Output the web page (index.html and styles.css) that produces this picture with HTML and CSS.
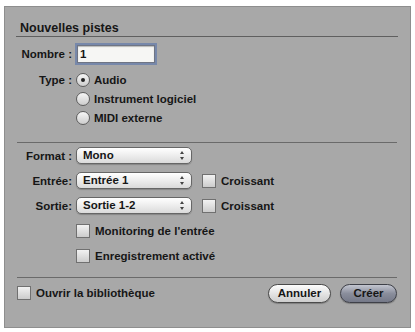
FILE: index.html
```html
<!DOCTYPE html>
<html lang="fr">
<head>
    <meta charset="UTF-8">
    <meta name="viewport" content="width=device-width, initial-scale=1.0">
    <title>Nouvelles pistes</title>
    <link rel="stylesheet" href="styles.css">
</head>
<body>
    <div class="dialog">
        <div class="header">Nouvelles pistes</div>

        <div class="form">
            <div class="row row-nombre">
                <label class="label" for="nombre">Nombre :</label>
                <input class="field" id="nombre" type="text" value="1">
            </div>

            <div class="row row-radio">
                <span class="label">Type :</span>
                <span class="option"><span class="radio checked"></span>Audio</span>
            </div>
            <div class="row row-radio">
                <span class="label"></span>
                <span class="option"><span class="radio"></span>Instrument logiciel</span>
            </div>
            <div class="row row-radio">
                <span class="label"></span>
                <span class="option"><span class="radio"></span>MIDI externe</span>
            </div>
        </div>

        <div class="separator sep-top"></div>

        <div class="form">
            <div class="row row-select">
                <span class="label">Format :</span>
                <span class="select">Mono<span class="arrows"></span></span>
            </div>
            <div class="row row-select">
                <span class="label">Entrée:</span>
                <span class="select">Entrée 1<span class="arrows"></span></span>
                <span class="option option-side"><span class="check"></span>Croissant</span>
            </div>
            <div class="row row-select">
                <span class="label">Sortie:</span>
                <span class="select">Sortie 1-2<span class="arrows"></span></span>
                <span class="option option-side"><span class="check"></span>Croissant</span>
            </div>
            <div class="row row-select">
                <span class="label"></span>
                <span class="option"><span class="check"></span>Monitoring de l'entrée</span>
            </div>
            <div class="row row-select">
                <span class="label"></span>
                <span class="option"><span class="check"></span>Enregistrement activé</span>
            </div>
        </div>

        <div class="separator sep-bottom"></div>

        <div class="footer">
            <span class="option"><span class="check"></span>Ouvrir la bibliothèque</span>
            <div class="buttons">
                <button class="btn">Annuler</button>
                <button class="btn btn-default">Créer</button>
            </div>
        </div>
    </div>
</body>
</html>
```

FILE: styles.css
```css
body {
    margin: 0;
    background: #ffffff;
    font-family: "Liberation Sans", Arial, sans-serif;
    font-size: 11.5px;
    font-weight: bold;
    color: #161616;
}
.dialog {
    margin: 6px 4px 4px 4px;
    width: 405px;
    height: 320px;
    background: #a8a8a8;
    border: 1px solid #8e8e8e;
    display: flex;
    flex-direction: column;
}
.header {
    margin: 0 12px 0 11px;
    padding: 13px 0 0 4px;
    height: 16px;
    line-height: 16px;
    font-size: 12.5px;
    border-bottom: 1px solid #5f5f5f;
}
.form {
    display: flex;
    flex-direction: column;
}
.row {
    display: flex;
    align-items: center;
}
.row-nombre {
    margin-top: 7px;
    height: 20px;
}
.row-nombre + .row-radio {
    margin-top: 6px;
}
.row-radio {
    height: 19px;
}
.row-select {
    height: 25px;
}
.label {
    width: 67px;
    text-align: right;
    margin-right: 4px;
    flex-shrink: 0;
}
.field {
    width: 72px;
    height: 16px;
    padding: 0 2px;
    border: 1px solid #6f7584;
    outline: 2px solid rgba(110, 130, 170, 0.85);
    outline-offset: 0;
    margin-left: 1px;
    background: #f6f6f4;
    font: inherit;
    color: #161616;
    box-shadow: inset 0 1px 1px rgba(0,0,0,0.25);
}
.option {
    display: flex;
    align-items: center;
}
.option-side {
    margin-left: 10px;
}
.radio {
    width: 12px;
    height: 12px;
    border-radius: 50%;
    border: 1px solid #5e5e5e;
    background: linear-gradient(#f6f6f6, #cdcdcd);
    margin-right: 4px;
    position: relative;
}
.radio.checked::after {
    content: "";
    position: absolute;
    left: 4px;
    top: 4px;
    width: 4px;
    height: 4px;
    border-radius: 50%;
    background: #222;
}
.check {
    width: 12px;
    height: 12px;
    border: 1px solid #707070;
    background: linear-gradient(#f2f2f2, #cccccc);
    margin-right: 5px;
}
.select {
    position: relative;
    box-sizing: border-box;
    width: 116px;
    height: 17px;
    line-height: 15px;
    padding-left: 6px;
    border: 1px solid #666;
    border-radius: 5px;
    background: linear-gradient(#ffffff, #ededed 50%, #dadada);
    box-shadow: 0 1px 1px rgba(0,0,0,0.2);
}
.arrows::before,
.arrows::after {
    content: "";
    position: absolute;
    right: 7px;
    border-left: 2px solid transparent;
    border-right: 2px solid transparent;
}
.arrows::before {
    top: 3px;
    border-bottom: 3px solid #444;
}
.arrows::after {
    bottom: 3px;
    border-top: 3px solid #444;
}
.separator {
    margin: 0 13px 0 12px;
    height: 1px;
    background: #6a6a6a;
}
.sep-top {
    margin-top: 15px;
}
.sep-bottom {
    margin-top: 9px;
}
.footer {
    height: 30px;
    display: flex;
    align-items: center;
    justify-content: space-between;
    padding: 0 13px 0 12px;
}
.buttons {
    display: flex;
    gap: 9px;
}
.btn {
    height: 19px;
    padding: 0;
    border: 1.5px solid #4a4a4a;
    border-radius: 10px;
    font: inherit;
    color: #161616;
    background: linear-gradient(#fdfdfd, #e4e4e4 50%, #cdcdcd);
    box-shadow: 0 1px 1px rgba(0,0,0,0.25);
}
.btn:first-child {
    width: 63px;
}
.btn-default {
    width: 57px;
    background: linear-gradient(#c3c6d0, #8a8e9c 50%, #757988);
    border-color: #3e4048;
}
```
